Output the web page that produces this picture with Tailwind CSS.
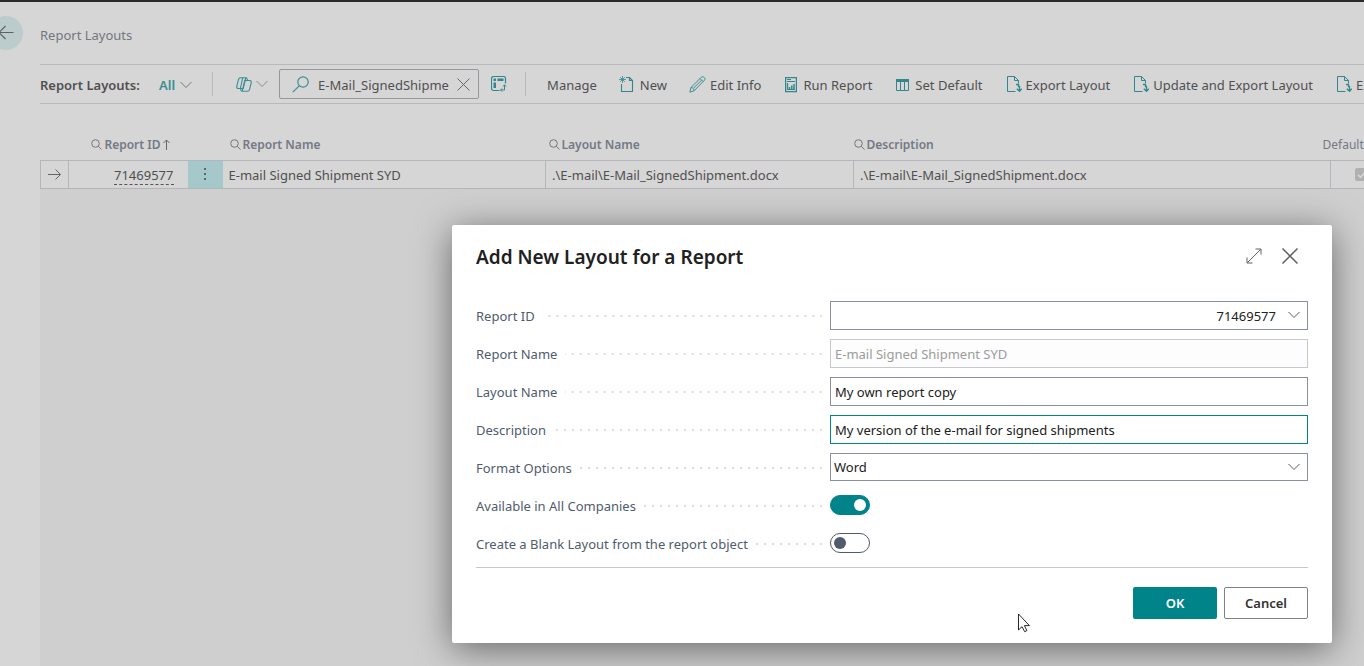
<!DOCTYPE html>
<html lang="en">
<head>
    <meta charset="UTF-8">
    <meta name="viewport" content="width=device-width, initial-scale=1.0">
    <title>Report Layouts</title>
    <script src="https://cdn.jsdelivr.net/npm/@tailwindcss/browser@4"></script>
</head>
<body class="relative min-h-screen flex flex-col overflow-hidden bg-[#d6d6d6] border-t-2 border-[#2b2b2b] font-['Noto_Sans','Open_Sans',sans-serif] text-[13px] leading-5 text-[#505050]">

    <!-- shared icons -->
    <svg class="hidden">
        <symbol id="chevron" viewBox="0 0 12 8"><path d="M.5 1L6 6.5 11.5 1" fill="none" stroke="currentColor"/></symbol>
        <symbol id="search" viewBox="0 0 11 11"><circle cx="4.5" cy="4.5" r="3.8" fill="none" stroke="currentColor"/><path d="M7.2 7.2l3.3 3.3" stroke="currentColor"/></symbol>
        <symbol id="export" viewBox="0 0 15 17">
            <path d="M8.500 15.500H.5V.5h7l4 4v3M7.500.5v4h4" fill="none" stroke="currentColor"/>
            <path d="M9 8.500h2.500v2h1v4M9.800 12.800l2.700 2.500 2.300-2.500" fill="none" stroke="currentColor" stroke-width="1.300"/>
        </symbol>
    </svg>

    <header class="flex items-center h-[62px] gap-[17px] pb-px">
        <button class="-ml-[11px] size-[34px] rounded-full bg-[#bccccc] flex items-center justify-center" aria-label="Back">
            <svg class="w-4 h-[15px]" viewBox="0 0 16 15"><path d="M15.500 7.500H1M7.500 1L1 7.500 7.500 14" fill="none" stroke="#5c6262" stroke-width="1.200"/></svg>
        </button>
        <h1 class="text-[#74777f] pt-1">Report Layouts</h1>
    </header>

    <div class="ml-10 h-10 shrink-0 flex items-center border-y border-[#b9babc] whitespace-nowrap">
        <span class="w-[119px] shrink-0 pt-px font-semibold">Report Layouts:</span>
        <button class="flex items-center gap-[5px] pt-px font-semibold text-[#3a8e92]">All
            <svg class="w-3 h-2 text-[#777]"><use href="#chevron"/></svg>
        </button>
        <span class="ml-5 w-px h-6 shrink-0 bg-[#b9babc]"></span>
        <button class="ml-[23px] mr-[11px] flex items-center gap-1 text-[#3a8e92]" aria-label="Copilot">
            <svg class="w-4 h-[15px]" viewBox="0 0 16 15" fill="none" stroke="currentColor" stroke-width="1.100">
                <path d="M4.500.7h5.300L7.200 11.500H2.300C.9 11.500.5 10.600.8 9.400L2.400 2.600C2.800 1.200 3.300.7 4.500.7z"/>
                <path d="M11.500 14.300H6.200L8.800 3.500h4.900c1.400 0 1.800.9 1.500 2.100l-1.600 6.800c-.4 1.400-.9 1.900-2.100 1.900z"/>
                <path d="M9.800.7c1.300 0 1.500 1 1.900 2.800M6.200 14.300c-1.300 0-1.500-1-1.900-2.800M6.700.9L4.500 11"/>
            </svg>
            <svg class="w-3 h-2 text-[#8a8a8a]"><use href="#chevron"/></svg>
        </button>
        <div class="w-[200px] h-[30px] shrink-0 flex items-center border border-[#96979f] rounded-xs pl-3 pr-2">
            <svg class="w-[18px] h-[17px] shrink-0 text-[#3a8e92]" viewBox="0 0 18 17"><circle cx="11" cy="6" r="5.200" fill="none" stroke="currentColor" stroke-width="1.200"/><path d="M7.200 9.800L.8 16.200" stroke="currentColor" stroke-width="1.200"/></svg>
            <input type="text" aria-label="Search" value="E-Mail_SignedShipment.docx" class="ml-2 pt-px w-[131px] bg-transparent outline-none">
            <button class="ml-2" aria-label="Clear search">
                <svg class="size-[13px]" viewBox="0 0 13 13"><path d="M.5.5l12 12M12.500.5l-12 12" stroke="#666"/></svg>
            </button>
        </div>
        <button class="ml-3 text-[#33868b]" aria-label="Analyze">
            <svg class="size-4" viewBox="0 0 16 16" fill="none" stroke="currentColor">
                <path d="M8.500 14.500h-6a2 2 0 0 1-2-2v-10a2 2 0 0 1 2-2h10a2 2 0 0 1 2 2v5" stroke-width="1.200"/>
                <path d="M2.500 2.500h2.500v2.500h-2.500zM2.500 6.500h2.500v5.500h-2.500zM6.500 2.500h6v2.500h-6z" fill="currentColor" stroke="none"/>
                <path d="M13.500 9v5H9.500M12 10.500l1.500-1.700 1.700 1.700M11 12.500L9.500 14l1.500 1.500"/>
            </svg>
        </button>
        <span class="ml-[18px] w-px h-6 shrink-0 bg-[#b9babc]"></span>
        <nav class="ml-[21px] pt-px grow min-w-0 overflow-hidden flex items-center gap-6">
            <div class="flex items-center gap-[22px]">
                <button>Manage</button>
                <button class="flex items-center gap-[6px]">
                    <svg class="w-[15px] h-[17px] text-[#33868b]" viewBox="0 0 15 17" fill="none" stroke="currentColor">
                        <path d="M7 1.500h3.500l3 3v11h-11V8M10.500 1.500v3h3" stroke-width="1.100"/>
                        <path d="M3.500 0v7M0 3.500h7M1.200 1.200l4.600 4.600M5.800 1.200L1.200 5.800" stroke-width=".8"/>
                    </svg>New
                </button>
                <button class="flex items-center gap-1">
                    <svg class="size-[17px] text-[#3a8e92]" viewBox="0 0 17 17" fill="none" stroke="currentColor"><path d="M.8 16.200l1.200-4.700L12.200 1.300c1-.9 2.200-.7 3 .1.900.9 1.100 2 .2 2.900L5.200 14.700.8 16.200zM2 11.500c1.700.1 3 1.300 3.200 3.200M11 2.500l3.300 3.300M4.500 12.200l8.300-8.300"/></svg>Edit Info
                </button>
            </div>
            <button class="flex items-center gap-[6px]">
                <svg class="w-3 h-4 text-[#33868b]" viewBox="0 0 12 16" fill="none" stroke="currentColor"><path d="M.6.6h10.800v14H.6zM2 2.500h4M2 4.500h8M2.500 6v6.500H10" stroke-width="1.200"/><path d="M4.500 13v-3M6.800 13V8.500M9 13V7" stroke-width="1.500"/></svg>Run Report
            </button>
            <button class="flex items-center gap-[6px]">
                <svg class="w-[13px] h-3 text-[#33868b]" viewBox="0 0 13 12" fill="none" stroke="currentColor"><path d="M.5.5h12v11H.5zM4.500 3v9M8.500 3v9"/><path d="M0 0h13v3H0z" fill="currentColor" stroke="none"/></svg>Set Default
            </button>
            <button class="flex items-center gap-1">
                <svg class="w-[15px] h-[17px] text-[#33868b]"><use href="#export"/></svg>Export Layout
            </button>
            <button class="flex items-center gap-1">
                <svg class="w-[15px] h-[17px] text-[#33868b]"><use href="#export"/></svg>Update and Export Layout
            </button>
            <button class="flex items-center gap-1">
                <svg class="w-[15px] h-[17px] text-[#33868b]"><use href="#export"/></svg>Ex
            </button>
        </nav>
    </div>

    <main class="ml-10 grow pt-[26px] flex flex-col overflow-hidden">
        <table class="table-fixed w-[1360px] border-collapse whitespace-nowrap text-left">
            <colgroup>
                <col class="w-7"><col class="w-[119px]"><col class="w-[35px]"><col class="w-[323px]"><col class="w-[308px]"><col class="w-[477px]"><col>
            </colgroup>
            <thead class="text-xs text-[#747985]">
                <tr class="h-[30px]">
                    <th></th>
                    <th class="font-semibold">
                        <span class="flex items-center justify-end gap-[2px] pr-[18px]">
                            <svg class="size-[11px] text-[#777]"><use href="#search"/></svg>Report ID
                            <svg class="w-[7px] h-[11px]" viewBox="0 0 7 11"><path d="M3.500 11V1M.5 4l3-3 3 3" fill="none" stroke="#666"/></svg>
                        </span>
                    </th>
                    <th></th>
                    <th class="font-semibold pl-[7px]"><span class="flex items-center gap-[2px]"><svg class="size-[11px] text-[#777]"><use href="#search"/></svg>Report Name</span></th>
                    <th class="font-semibold pl-[3px]"><span class="flex items-center gap-[2px]"><svg class="size-[11px] text-[#777]"><use href="#search"/></svg>Layout Name</span></th>
                    <th class="font-semibold"><span class="flex items-center gap-[2px]"><svg class="size-[11px] text-[#777]"><use href="#search"/></svg>Description</span></th>
                    <th class="font-normal"><span class="-ml-2">Default</span></th>
                </tr>
            </thead>
            <tbody>
                <tr class="h-7 border border-[#b5b6bb]">
                    <td class="border border-[#b5b6bb]"><svg class="mx-auto w-[13px] h-[11px]" viewBox="0 0 13 11"><path d="M0 5.500h12.500M7.500.5l5 5-5 5" fill="none" stroke="#666"/></svg></td>
                    <td class="text-right pt-px pr-[14px]"><a href="#" class="border-b border-dashed border-[#555]">71469577</a></td>
                    <td class="bg-[#a5c8ca]">
                        <button class="w-full flex flex-col items-center gap-[3px]" aria-label="More options">
                            <span class="size-[2px] bg-[#5a6a6c]"></span><span class="size-[2px] bg-[#5a6a6c]"></span><span class="size-[2px] bg-[#5a6a6c]"></span>
                        </button>
                    </td>
                    <td class="pt-px pl-[6px] border-r border-[#b5b6bb]">E-mail Signed Shipment SYD</td>
                    <td class="pt-px pl-[6px] border-r border-[#b5b6bb]">.\E-mail\E-Mail_SignedShipment.docx</td>
                    <td class="pt-px pl-[6px] border-r border-[#b5b6bb]">.\E-mail\E-Mail_SignedShipment.docx</td>
                    <td class="pl-6">
                        <span class="block relative size-[13px]">
                            <input type="checkbox" checked disabled aria-label="Default" class="block appearance-none size-[13px] rounded-xs bg-[#b0b0b0]">
                            <svg class="absolute inset-0 size-[13px]" viewBox="0 0 13 13"><path d="M3 6.800l2.500 2.500L10.300 4" fill="none" stroke="#d6d6d6" stroke-width="1.500"/></svg>
                        </span>
                    </td>
                </tr>
            </tbody>
        </table>
        <div class="grow bg-[#cfcfcf]"></div>
    </main>

    <!-- dialog -->
    <div role="dialog" aria-labelledby="dialog-title" class="absolute top-[223px] right-8 w-[880px] px-6 pb-6 bg-white rounded-xs shadow-[0_6px_36px_rgba(0,0,0,0.5)] text-[#505c6d]">
        <div class="flex items-center h-16 mb-3">
            <h2 id="dialog-title" class="grow text-[19px] font-semibold text-[#212121]">Add New Layout for a Report</h2>
            <button class="mr-5 mb-[2px]" aria-label="Expand">
                <svg class="size-4" viewBox="0 0 16 16"><path d="M1.500 14.500l13-13M9.500 1h5.500v5.500M1 9.500V15h5.500" fill="none" stroke="#606060"/></svg>
            </button>
            <button class="mr-[10px] mb-[2px]" aria-label="Close">
                <svg class="size-4" viewBox="0 0 16 16"><path d="M.5.5l15 15M15.500.5l-15 15" stroke="#606060" stroke-width="1.500"/></svg>
            </button>
        </div>

        <form class="flex flex-col gap-[9px]">
            <div class="flex items-center h-[29px]">
                <label for="report-id" class="flex items-center gap-2 w-[354px] shrink-0 pr-2">Report ID
                    <span class="grow h-[2px] bg-[linear-gradient(to_left,#dcdcdc_2px,transparent_2px)] bg-size-[8px_2px] bg-right"></span>
                </label>
                <div class="relative grow">
                    <input id="report-id" type="text" value="71469577" class="block w-full h-[29px] border border-[#8a919e] pl-1 pr-[31px] text-right text-[#212121] outline-none">
                    <svg class="absolute right-2 top-[10px] w-3 h-2 text-[#505c6d]"><use href="#chevron"/></svg>
                </div>
            </div>
            <div class="flex items-center h-[29px]">
                <label for="report-name" class="flex items-center gap-2 w-[354px] shrink-0 pr-2">Report Name
                    <span class="grow h-[2px] bg-[linear-gradient(to_left,#dcdcdc_2px,transparent_2px)] bg-size-[8px_2px] bg-right"></span>
                </label>
                <input id="report-name" type="text" disabled value="E-mail Signed Shipment SYD" class="grow h-[29px] border border-[#c5c8ce] bg-[#fdfdfd] px-1 text-[#9b9b9b]">
            </div>
            <div class="flex items-center h-[29px]">
                <label for="layout-name" class="flex items-center gap-2 w-[354px] shrink-0 pr-2">Layout Name
                    <span class="grow h-[2px] bg-[linear-gradient(to_left,#dcdcdc_2px,transparent_2px)] bg-size-[8px_2px] bg-right"></span>
                </label>
                <input id="layout-name" type="text" value="My own report copy" class="grow h-[29px] border border-[#8a919e] px-1 text-[#212121] outline-none">
            </div>
            <div class="flex items-center h-[29px]">
                <label for="description" class="flex items-center gap-2 w-[354px] shrink-0 pr-2">Description
                    <span class="grow h-[2px] bg-[linear-gradient(to_left,#dcdcdc_2px,transparent_2px)] bg-size-[8px_2px] bg-right"></span>
                </label>
                <input id="description" type="text" value="My version of the e-mail for signed shipments" class="grow h-[29px] border border-[#00848a] px-1 text-[#212121] outline-none">
            </div>
            <div class="flex items-center h-[29px]">
                <label for="format" class="flex items-center gap-2 w-[354px] shrink-0 pr-2">Format Options
                    <span class="grow h-[2px] bg-[linear-gradient(to_left,#dcdcdc_2px,transparent_2px)] bg-size-[8px_2px] bg-right"></span>
                </label>
                <div class="relative grow h-[29px]">
                    <select id="format" class="block w-full h-7 appearance-none border border-[#8a919e] bg-white pl-[3px] text-[#212121] outline-none">
                        <option>Word</option>
                        <option>RDLC</option>
                        <option>Excel</option>
                    </select>
                    <svg class="absolute right-2 top-[10px] w-3 h-2 text-[#505c6d] pointer-events-none"><use href="#chevron"/></svg>
                </div>
            </div>
            <div class="flex items-center h-[29px]">
                <label for="all-companies" class="flex items-center gap-2 w-[354px] shrink-0 pr-2">Available in All Companies
                    <span class="grow h-[2px] bg-[linear-gradient(to_left,#dcdcdc_2px,transparent_2px)] bg-size-[8px_2px] bg-right"></span>
                </label>
                <input id="all-companies" type="checkbox" role="switch" checked class="self-start mt-1 appearance-none flex items-center w-10 h-5 rounded-full border border-[#505c6d] px-[3px] before:size-3 before:rounded-full before:bg-[#505c6d] checked:justify-end checked:border-[#00848a] checked:bg-[#00848a] checked:before:bg-white">
            </div>
            <div class="flex items-center h-[29px]">
                <label for="blank-layout" class="flex items-center gap-2 w-[354px] shrink-0 pr-2">Create a Blank Layout from the report object
                    <span class="grow h-[2px] bg-[linear-gradient(to_left,#dcdcdc_2px,transparent_2px)] bg-size-[8px_2px] bg-right"></span>
                </label>
                <input id="blank-layout" type="checkbox" role="switch" class="self-start mt-1 appearance-none flex items-center w-10 h-5 rounded-full border border-[#505c6d] px-[3px] before:size-3 before:rounded-full before:bg-[#505c6d] checked:justify-end checked:border-[#00848a] checked:bg-[#00848a] checked:before:bg-white">
            </div>
            <div class="flex justify-end gap-[7px] border-t border-[#c8c8c8] pt-[19px] font-semibold">
                <button type="submit" class="w-[84px] h-8 rounded-xs bg-[#00848a] text-white">OK</button>
                <button type="button" class="w-[84px] h-8 rounded-xs border border-[#808080] text-[#333]">Cancel</button>
            </div>
        </form>
    </div>

    <!-- mouse pointer -->
    <svg class="absolute left-[1018px] top-[611px] w-3 h-5 pointer-events-none" viewBox="0 0 12 20"><path d="M.5 1v16l3.500-3.300 2.700 5 2.200-1.100-2.500-5h5z" fill="#fff" stroke="#111" stroke-width=".9"/></svg>
</body>
</html>
